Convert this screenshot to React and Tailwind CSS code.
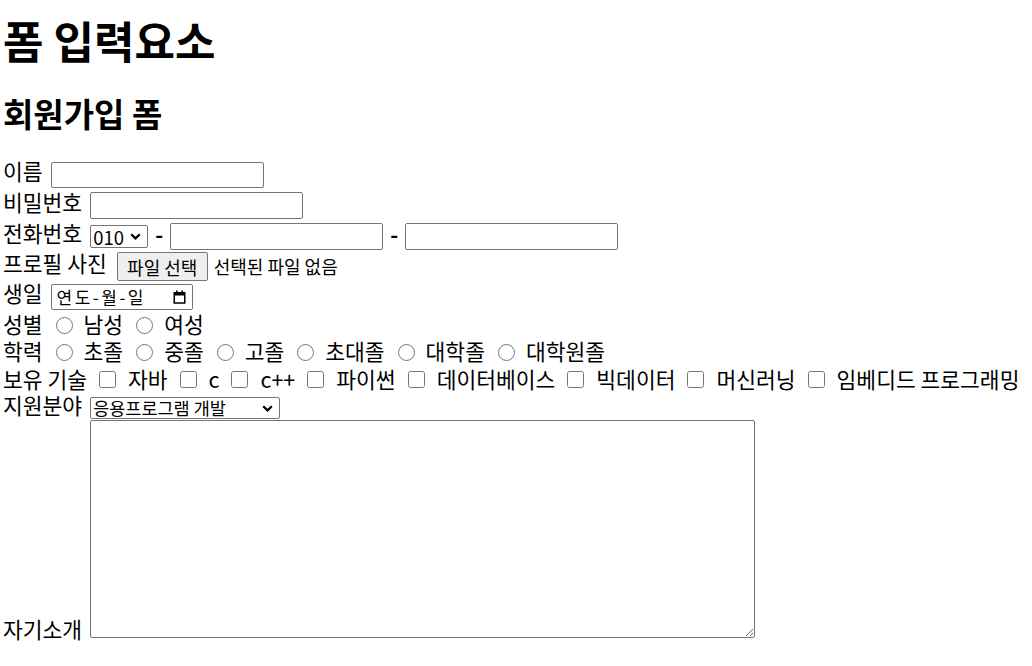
import React from "react";

const box = "border border-[#767676] rounded-[2px] bg-white";
const radio = "w-[17px] h-[17px] ml-[13px] mr-[11px] shrink-0";
const check = "w-[17px] h-[17px] ml-[12px] mr-[12px] shrink-0";
const txt = "pb-[2px] shrink-0 whitespace-nowrap";

function CalendarIcon() {
  return (
    <svg width="13" height="14" viewBox="0 0 13 14" className="ml-auto mr-[6px]">
      <rect x="1.25" y="2.75" width="10.5" height="10.25" fill="none" stroke="#000" strokeWidth="1.5" />
      <rect x="1" y="2.5" width="11" height="3" fill="#000" />
      <rect x="3" y="0.5" width="1.6" height="3" fill="#000" />
      <rect x="8.4" y="0.5" width="1.6" height="3" fill="#000" />
    </svg>
  );
}

function Chevron() {
  return (
    <svg width="11" height="7" viewBox="0 0 11 7" className="ml-auto mr-[6px] shrink-0">
      <path d="M1.2 1.2 L5.5 5.4 L9.8 1.2" fill="none" stroke="#000" strokeWidth="2.2" />
    </svg>
  );
}

function FakeSelect({ value, className, size }) {
  return (
    <div role="combobox" className={`flex items-center ${box} ${className}`}>
      <span className={`pl-[2px] leading-[20px] whitespace-nowrap ${size}`}>{value}</span>
      <Chevron />
    </div>
  );
}

function RadioGroup({ label, items }) {
  return (
    <>
      <span className={txt}>{label}</span>
      {items.map((item, i) => (
        <React.Fragment key={item}>
          <input type="radio" name={label} className={i === 0 ? "w-[17px] h-[17px] ml-[13px] mr-[11px] shrink-0" : radio} />
          <span className={txt}>{item}</span>
        </React.Fragment>
      ))}
    </>
  );
}

export default function App() {
  const skills = ["자바", "c", "c++", "파이썬", "데이터베이스", "빅데이터", "머신러닝", "임베디드 프로그래밍"];

  return (
    <div className="min-h-[666px] bg-white text-black pl-[3px] font-['Noto_Sans_CJK_KR','Noto_Sans',sans-serif]">
      <h1 className="text-[44px] leading-[48px] font-bold pt-[16px]">폼 입력요소</h1>
      <h2 className="text-[33px] leading-[36px] font-bold mt-[31px]">회원가입 폼</h2>

      <form className="mt-[29px] flex flex-col text-[21.5px] leading-[20px]">
        <div className="flex items-center h-[30px]">
          <span className="pb-[8px]">이름</span>
          <input type="text" className={`ml-[8px] w-[213px] h-[26px] ${box}`} />
        </div>

        <div className="flex items-center h-[31px]">
          <span className="pb-[8px]">비밀번호</span>
          <input type="password" className={`ml-[8px] w-[213px] h-[27px] ${box}`} />
        </div>

        <div className="flex items-center h-[31px]">
          <span className="pb-[8px]">전화번호</span>
          <FakeSelect value="010" size="text-[18.5px]" className="ml-[8px] w-[58px] h-[23px]" />
          <span className="w-[22px] text-center pb-[6px] font-bold">-</span>
          <input type="text" className={`w-[213px] h-[27px] ${box}`} />
          <span className="w-[22px] text-center pb-[6px] font-bold">-</span>
          <input type="text" className={`w-[213px] h-[27px] ${box}`} />
        </div>

        <div className="flex items-center h-[29px]">
          <span className="pb-[8px] whitespace-nowrap">프로필 사진</span>
          <button type="button" className="ml-[10px] w-[91px] h-[29px] text-[18px] leading-[20px] bg-[#efefef] border border-[#767676] rounded-[2px]">
            파일 선택
          </button>
          <span className="ml-[6px] text-[18px] leading-[20px] pb-[2px] whitespace-nowrap">선택된 파일 없음</span>
        </div>

        <div className="flex items-center h-[32px]">
          <span className="pb-[8px]">생일</span>
          <div className={`ml-[8px] w-[142px] h-[26px] flex items-center ${box}`}>
            <span className="pl-[5px] text-[17px] leading-[20px] tracking-[2.5px] whitespace-nowrap">연도-월-일</span>
            <CalendarIcon />
          </div>
        </div>

        <div className="flex items-center h-[24px]">
          <RadioGroup label="성별" items={["남성", "여성"]} />
        </div>

        <div className="flex items-center h-[30px]">
          <RadioGroup label="학력" items={["초졸", "중졸", "고졸", "초대졸", "대학졸", "대학원졸"]} />
        </div>

        <div className="flex items-center h-[25px]">
          <span className={txt}>보유 기술</span>
          {skills.map((s, i) => (
            <React.Fragment key={s}>
              <input type="checkbox" className={i === 0 ? "w-[17px] h-[17px] ml-[12px] mr-[12px] shrink-0" : check} />
              <span className={txt}>{s}</span>
            </React.Fragment>
          ))}
        </div>

        <div className="flex items-center h-[28px]">
          <span className={txt}>지원분야</span>
          <FakeSelect value="응용프로그램 개발" size="text-[17.5px]" className="self-end mb-[1px] ml-[8px] w-[190px] h-[22px]" />
        </div>

        <div className="flex items-end">
          <span className="leading-[18px] whitespace-nowrap">자기소개</span>
          <textarea className={`ml-[8px] w-[665px] h-[218px] ${box}`} />
        </div>
      </form>
    </div>
  );
}
